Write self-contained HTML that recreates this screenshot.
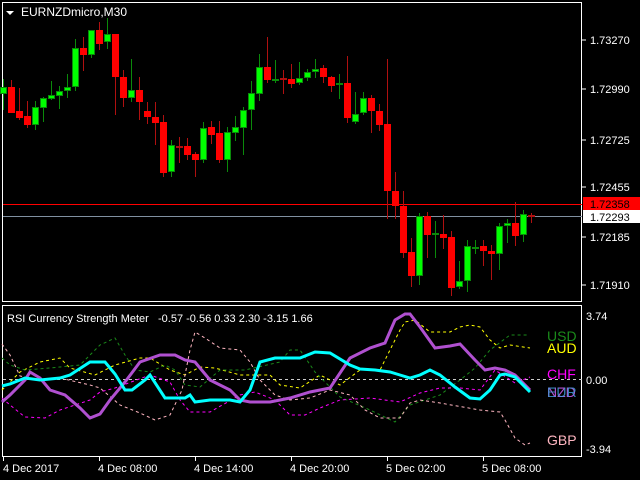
<!DOCTYPE html>
<html><head><meta charset="utf-8"><style>
html,body{margin:0;padding:0;background:#000;width:640px;height:480px;overflow:hidden}
svg{display:block}
text{font-family:"Liberation Sans",sans-serif}
</style></head><body>
<svg width="640" height="480" xmlns="http://www.w3.org/2000/svg">
<rect width="640" height="480" fill="#000"/>
<rect x="2.5" y="2.5" width="579" height="299" fill="none" stroke="#fff" stroke-width="1"/>
<rect x="2.5" y="305.5" width="579" height="151" fill="none" stroke="#fff" stroke-width="1"/>
<rect x="0" y="302" width="583" height="3" fill="#000"/>
<line x1="2" y1="301.5" x2="582" y2="301.5" stroke="#fff"/>
<polygon points="6,11 14,11 10,15" fill="#fff"/>
<text x="21" y="16" font-size="12" fill="#fff">EURNZDmicro,M30</text>
<line x1="3" y1="204.5" x2="582" y2="204.5" stroke="#f00" stroke-width="1"/>
<line x1="3" y1="216.5" x2="582" y2="216.5" stroke="#8090a0" stroke-width="1"/>
<g id="candles"></g>
<g font-size="11" fill="#fff">
<line x1="582" y1="40" x2="586" y2="40" stroke="#fff"/><text x="590" y="44">1.73270</text>
<line x1="582" y1="89" x2="586" y2="89" stroke="#fff"/><text x="590" y="93">1.72990</text>
<line x1="582" y1="140" x2="586" y2="140" stroke="#fff"/><text x="590" y="144">1.72725</text>
<line x1="582" y1="187" x2="586" y2="187" stroke="#fff"/><text x="590" y="191">1.72455</text>
<line x1="582" y1="237" x2="586" y2="237" stroke="#fff"/><text x="590" y="241">1.72185</text>
<line x1="582" y1="285" x2="586" y2="285" stroke="#fff"/><text x="590" y="289">1.71910</text>
</g>
<rect x="583" y="197" width="57" height="13" fill="#f00"/>
<text x="590" y="208" font-size="11" fill="#000">1.72358</text>
<rect x="583" y="210" width="57" height="13" fill="#fff"/>
<text x="590" y="221" font-size="11" fill="#000">1.72293</text>
<text x="7" y="322" font-size="11" fill="#fff" xml:space="preserve">RSI Currency Strength Meter   -0.57 -0.56 0.33 2.30 -3.15 1.66</text>
<line x1="3" y1="379.5" x2="582" y2="379.5" stroke="#ccc" stroke-dasharray="3,3"/>
<g fill="none" stroke-dasharray="3,3" stroke-width="1">
<polyline stroke="#ffff00" points="2,390 20,372 40,362 60,358 70,368 95,375 115,365 140,358 150,358 170,370 185,375 200,367 215,368 240,375 270,375 280,385 300,388 320,375 340,385 360,370 380,370 390,350 400,330 405,322 415,320 430,332 450,332 460,327 470,325 480,327 490,340 500,348 510,345 530,348"/>
<polyline stroke="#1a8a1a" points="2,358 10,365 25,370 50,368 80,365 100,345 115,338 125,355 135,370 150,372 165,365 175,370 185,385 200,387 220,370 245,370 280,362 290,350 300,350 315,372 340,397 370,410 395,422 410,405 440,395 460,380 475,368 490,350 510,335 528,335"/>
<polyline stroke="#ffb6c1" points="2,344 10,355 20,376 40,380 60,378 90,385 100,388 120,405 140,413 155,420 170,415 182,390 190,350 195,332 205,338 220,348 240,350 250,362 260,380 275,395 290,400 310,398 330,390 350,395 365,410 380,418 400,418 410,403 420,400 440,403 480,410 500,412 505,420 515,438 525,445 530,443"/>
<polyline stroke="#ff00ff" points="2,398 10,405 25,417 45,418 60,410 75,405 90,400 100,392 115,388 150,375 170,382 180,400 190,412 210,412 240,395 255,392 275,400 290,415 305,415 320,408 340,400 370,398 400,402 420,393 440,388 460,388 480,390 495,370 515,383 530,377"/>
</g>
<polyline fill="none" stroke="#b050d0" stroke-width="3" points="2,402 10,395 25,380 30,372 40,378 50,390 65,395 80,408 90,418 100,414 110,400 125,382 140,362 160,355 175,355 185,360 195,362 210,380 230,390 240,400 250,402 270,402 290,398 310,392 330,388 350,358 370,348 385,343 395,320 405,314 410,314 420,327 435,348 450,346 460,344 475,360 485,370 495,368 505,370 515,375 530,390"/>
<polyline fill="none" stroke="#00ffff" stroke-width="3" points="2,386 10,384 25,378 40,380 60,378 70,375 90,362 105,362 115,374 125,390 132,390 145,380 150,375 165,398 185,398 190,395 195,402 210,400 230,400 240,402 250,390 260,362 275,358 300,358 315,352 330,353 350,365 360,369 375,370 390,372 400,375 410,378 420,375 430,370 440,375 455,387 470,398 480,399 490,390 500,375 505,374 515,377 530,392"/>
<g font-size="14">
<text x="547" y="341" fill="#1a8a1a">USD</text>
<text x="547" y="353" fill="#ffff00">AUD</text>
<text x="547" y="379" fill="#ff00ff">CHF</text>
<text x="547" y="397" fill="#b050d0">NZD</text>
<text x="547" y="397" fill="#40a0e0" fill-opacity="0.8">EUR</text>
<text x="547" y="445" fill="#ffb6c1">GBP</text>
</g>
<g font-size="11" fill="#fff">
<text x="586" y="320">3.74</text>
<text x="586" y="384">0.00</text>
<text x="586" y="453">-3.94</text>
</g>
<g font-size="11" fill="#fff" stroke="none">
<text x="3" y="472">4 Dec 2017</text>
<text x="98" y="472">4 Dec 08:00</text>
<text x="194" y="472">4 Dec 14:00</text>
<text x="290" y="472">4 Dec 20:00</text>
<text x="386" y="472">5 Dec 02:00</text>
<text x="482" y="472">5 Dec 08:00</text>
</g>
<g stroke="#fff">
<line x1="3.5" y1="457" x2="3.5" y2="461"/><line x1="99.5" y1="457" x2="99.5" y2="461"/><line x1="195.5" y1="457" x2="195.5" y2="461"/><line x1="291.5" y1="457" x2="291.5" y2="461"/><line x1="387.5" y1="457" x2="387.5" y2="461"/><line x1="483.5" y1="457" x2="483.5" y2="461"/>
</g>
</svg>
<script>
var d=[[87,94,79,110,1],[87,113,80,113,0],[111,118,88,120,0],[116,125,101,128,0],[107,125,101,130,1],[98,108,97,122,1],[95,99,81,100,1],[91,96,86,109,1],[87,91,74,98,1],[48,87,39,91,1],[48,55,37,71,0],[30,55,30,58,1],[30,44,22,50,0],[34,42,18,49,1],[34,77,34,115,0],[77,98,70,107,0],[90,98,59,102,1],[90,102,77,120,0],[111,117,102,124,0],[117,123,102,145,0],[122,173,115,177,0],[145,172,140,177,1],[146,146,137,163,0],[146,155,138,160,0],[154,160,152,177,0],[128,160,122,163,1],[127,135,121,144,0],[133,160,121,163,0],[132,160,127,172,1],[127,133,116,141,1],[110,128,107,155,1],[93,110,81,130,1],[67,94,54,101,1],[67,80,37,83,0],[79,79,60,83,1],[78,78,70,94,0],[79,84,64,88,0],[78,83,62,85,1],[72,78,69,81,1],[69,72,59,78,1],[68,77,65,83,0],[77,86,76,92,0],[83,85,74,99,1],[83,118,56,123,0],[114,122,92,124,1],[98,113,92,115,1],[98,111,95,133,0],[111,125,104,131,0],[124,191,59,219,0],[191,206,172,219,0],[206,253,191,258,0],[252,276,238,287,0],[216,276,213,285,1],[216,235,212,258,0],[233,233,221,258,1],[234,238,215,249,0],[237,288,231,296,0],[281,287,261,289,1],[246,281,240,292,1],[247,247,240,254,1],[246,251,240,266,0],[251,254,245,280,0],[226,254,223,270,1],[223,226,219,243,1],[223,236,202,246,0],[214,235,210,242,1],[215,215,213,223,0]];
var g=document.getElementById('candles'),s='';
d.forEach(function(c,k){var x=3+8*k,up=c[4],wc=up?'#0a8a0a':'#b01010',bc=up?'#00ff00':'#ff0000';
s+='<rect x="'+(x)+'" y="'+c[2]+'" width="1" height="'+(c[3]-c[2])+'" fill="'+wc+'"/>';
var h=c[1]-c[0];if(h<2){s+='<rect x="'+(x-3)+'" y="'+c[0]+'" width="7" height="2" fill="'+wc+'"/>';}
else{s+='<rect x="'+(x-2.5)+'" y="'+(c[0]+0.5)+'" width="6" height="'+(h-1)+'" fill="'+bc+'" stroke="'+(up?'#0a8a0a':bc)+'" stroke-width="1"/>';}});
g.innerHTML=s;
</script>
</body></html>
